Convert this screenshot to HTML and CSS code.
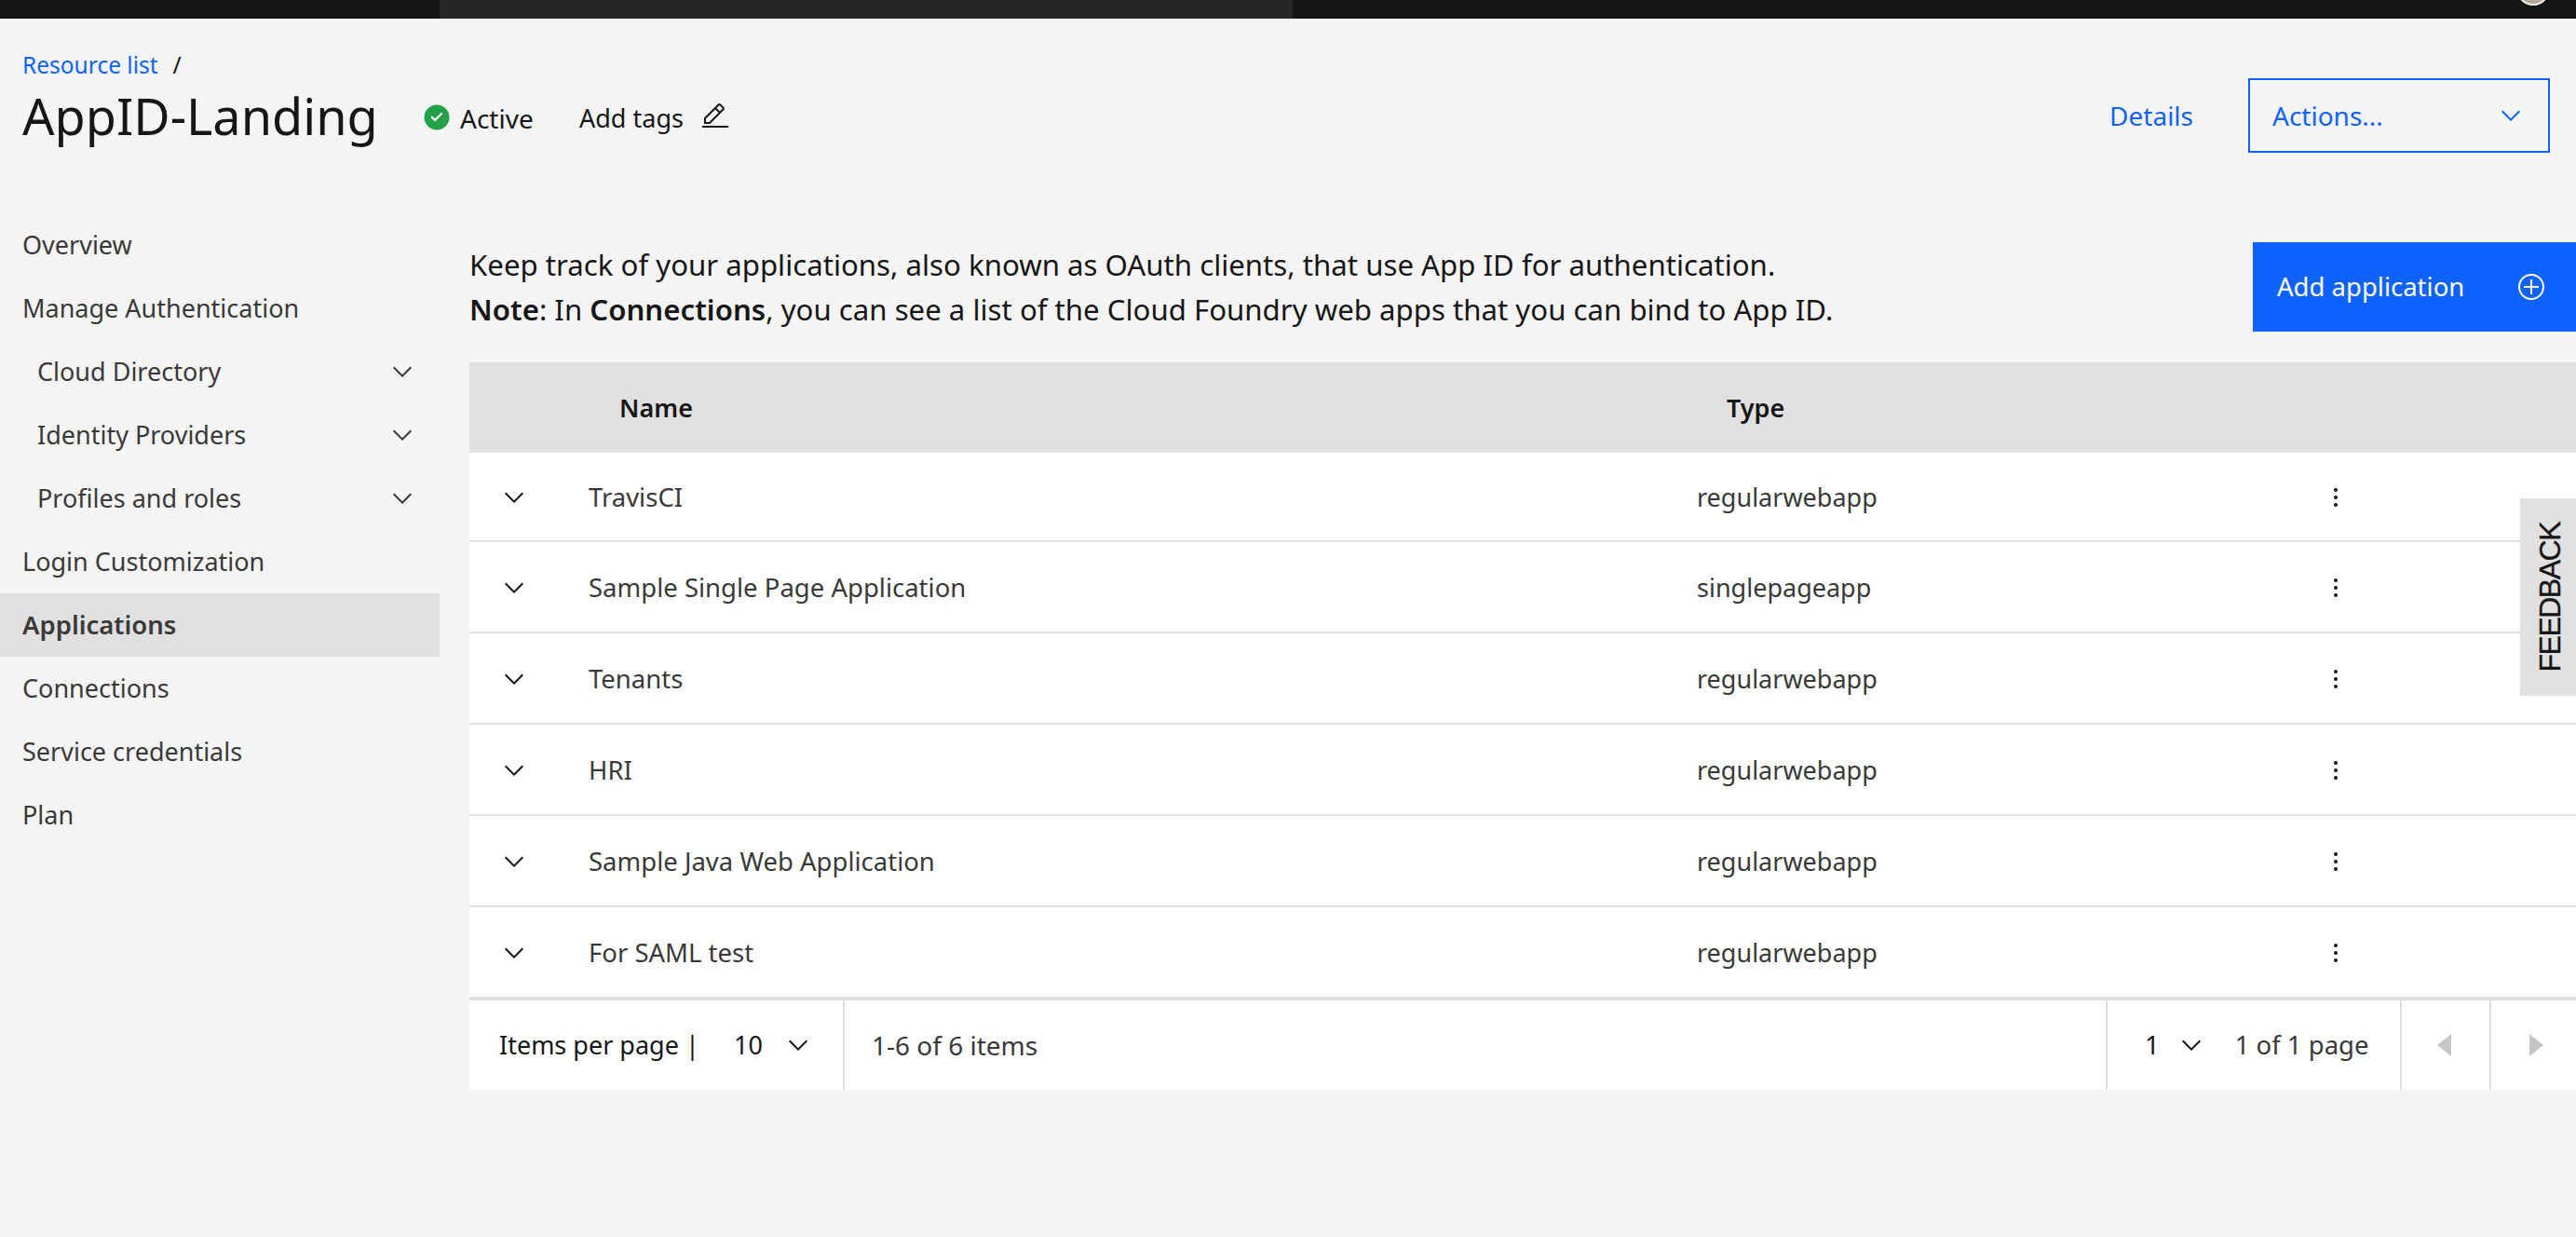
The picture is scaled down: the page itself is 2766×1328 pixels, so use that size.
FILE: index.html
```html
<!DOCTYPE html>
<html>
<head>
    <title>AppID-Landing: Applications</title>
    <meta charset="utf-8" />
    <link rel="stylesheet" href="styles.css">
</head>
<body>
    <svg class="sprite" xmlns="http://www.w3.org/2000/svg">
        <symbol id="chev" viewBox="0 0 32 32"><path d="M16 22L6 12l1.4-1.4L16 19.2l8.6-8.6L26 12z"/></symbol>
        <symbol id="kebab" viewBox="0 0 32 32"><circle cx="16" cy="8" r="2"/><circle cx="16" cy="16" r="2"/><circle cx="16" cy="24" r="2"/></symbol>
    </svg>

    <div class="topbar">
        <div class="topbar-mid"></div>
        <div class="avatar"></div>
    </div>

    <header class="head">
        <div class="crumbs"><a class="crumb-link">Resource list</a><span class="crumb-sep">/</span></div>
        <div class="head-row">
            <h1 class="title">AppID-Landing</h1>
            <svg class="status-icon" viewBox="0 0 28 28"><circle cx="14" cy="14" r="13.5" fill="#24a148"/><path d="M12 18.6l-4.6-4.6 1.5-1.5 3.1 3.1 6.900-6.900 1.500 1.500z" fill="#fff"/></svg>
            <span class="status-text">Active</span>
            <span class="tags-text">Add tags</span>
            <svg class="edit-icon" viewBox="0 0 32 32"><path d="M2 26h28v2H2z"/><path d="M25.400 9c.8-.8.8-2 0-2.800l-3.600-3.600c-.8-.8-2-.8-2.800 0l-15 15V24h6.400l15-15zm-5-5L24 7.600l-3 3L17.400 7l3-3zM6 22v-3.600l10-10 3.600 3.600-10 10H6z"/></svg>
            <a class="details">Details</a>
            <div class="actions">
                <span>Actions...</span>
                <svg class="icon"><use href="#chev"/></svg>
            </div>
        </div>
    </header>

    <div class="layout">
        <nav class="side">
            <a class="side-item">Overview</a>
            <a class="side-item">Manage Authentication</a>
            <a class="side-item sub">Cloud Directory<svg class="icon side-chev"><use href="#chev"/></svg></a>
            <a class="side-item sub">Identity Providers<svg class="icon side-chev"><use href="#chev"/></svg></a>
            <a class="side-item sub">Profiles and roles<svg class="icon side-chev"><use href="#chev"/></svg></a>
            <a class="side-item">Login Customization</a>
            <a class="side-item current">Applications</a>
            <a class="side-item">Connections</a>
            <a class="side-item">Service credentials</a>
            <a class="side-item">Plan</a>
        </nav>

        <main class="main">
            <section class="intro">
                <p class="intro-text">Keep track of your applications, also known as OAuth clients, that use App ID for authentication.<br>
                <b>Note</b>: In <b>Connections</b>, you can see a list of the Cloud Foundry web apps that you can bind to App ID.</p>
                <button class="add-btn">
                    <span>Add application</span>
                    <svg class="icon" viewBox="0 0 32 32"><path d="M16 4c6.600 0 12 5.400 12 12s-5.400 12-12 12S4 22.600 4 16 9.400 4 16 4m0-2C8.300 2 2 8.300 2 16s6.300 14 14 14 14-6.300 14-14S23.700 2 16 2z"/><path d="M24 15h-7V8h-2v7H8v2h7v7h2v-7h7z"/></svg>
                </button>
            </section>

            <div class="table-head">
                <span class="th-name">Name</span>
                <span class="th-type">Type</span>
            </div>
            <div class="rows">
                <div class="row"><svg class="icon"><use href="#chev"/></svg><span class="cell-name">TravisCI</span><span class="cell-type">regularwebapp</span><svg class="icon"><use href="#kebab"/></svg></div>
                <div class="row"><svg class="icon"><use href="#chev"/></svg><span class="cell-name">Sample Single Page Application</span><span class="cell-type">singlepageapp</span><svg class="icon"><use href="#kebab"/></svg></div>
                <div class="row"><svg class="icon"><use href="#chev"/></svg><span class="cell-name">Tenants</span><span class="cell-type">regularwebapp</span><svg class="icon"><use href="#kebab"/></svg></div>
                <div class="row"><svg class="icon"><use href="#chev"/></svg><span class="cell-name">HRI</span><span class="cell-type">regularwebapp</span><svg class="icon"><use href="#kebab"/></svg></div>
                <div class="row"><svg class="icon"><use href="#chev"/></svg><span class="cell-name">Sample Java Web Application</span><span class="cell-type">regularwebapp</span><svg class="icon"><use href="#kebab"/></svg></div>
                <div class="row"><svg class="icon"><use href="#chev"/></svg><span class="cell-name">For SAML test</span><span class="cell-type">regularwebapp</span><svg class="icon"><use href="#kebab"/></svg></div>
            </div>

            <div class="pager">
                <div class="pager-size">
                    <span class="pager-label">Items per page |</span>
                    <span class="pager-value">10</span>
                    <svg class="icon"><use href="#chev"/></svg>
                </div>
                <div class="pager-count">1-6 of 6 items</div>
                <div class="pager-page">
                    <span class="pager-value">1</span>
                    <svg class="icon"><use href="#chev"/></svg>
                    <span class="pager-of">1 of 1 page</span>
                </div>
                <div class="pager-arrow"><svg class="caret" viewBox="0 0 32 32"><path d="M20 24l-10-8 10-8z"/></svg></div>
                <div class="pager-arrow last"><svg class="caret" viewBox="0 0 32 32"><path d="M12 8l10 8-10 8z"/></svg></div>
            </div>
        </main>
    </div>

    <div class="feedback"><span>FEEDBACK</span></div>
</body>
</html>
```

FILE: styles.css
```css
html, body {margin: 0; height: 100%; overflow: hidden;}
body {
    position: relative;
    background: #f4f4f4;
    color: #161616;
    font: 28px/48px "Noto Sans", "Liberation Sans", sans-serif;}
.sprite {display: none;}
.icon {width: 32px; height: 32px; flex: none; fill: currentColor;}
b {font-weight: 600;}

/* top bar */
.topbar {height: 20px; background: #161616; position: relative; overflow: hidden;}
.topbar-mid {margin-left: 472px; width: 916px; height: 20px; background: #262626;}
.avatar {
    position: absolute;
    right: 28px;
    top: -30px;
    width: 32px;
    height: 32px;
    border-radius: 50%;
    background: #b9a994;
    border: 2px solid #eee;}

/* page head */
.head {height: 209px; box-sizing: border-box; padding: 30px 28px 0 24px;}
.crumbs {height: 40px; display: flex; align-items: center; font-size: 24.500px;}
.crumb-link {color: #0f62fe;}
.crumb-sep {margin-left: 16px;}
.head-row {display: flex; align-items: center; height: 80px; margin-top: -6px;}
.title {margin: 0; font-size: 54px; font-weight: 400; line-height: 80px; width: 431px;}
.status-icon {width: 28px; height: 28px; margin: 4px 11px 0 0;}
.status-text {width: 128px; margin-top: 6px;}
.tags-text {width: 130px; margin-top: 6px; font-size: 27px;}
.edit-icon {width: 32px; height: 32px; fill: #161616; margin-top: 2px;}
.details {margin-left: auto; color: #0f62fe; margin-right: 59px;}
.actions {
    width: 324px;
    height: 80px;
    box-sizing: border-box;
    border: 2px solid #0f62fe;
    color: #0f62fe;
    padding: 0 24px 0 24px;
    display: flex;
    align-items: center;
    justify-content: space-between;}

/* side nav */
.layout {display: flex;}
.side {width: 472px; flex: none; color: #393939; font-size: 27px;}
.side-item {
    display: flex;
    align-items: center;
    justify-content: space-between;
    height: 68px;
    padding: 0 24px 0 24px;}
.side-item.sub {padding-left: 40px;}
.side-chev {color: #393939;}
.side-item.current {background: #e0e0e0; font-weight: 600; font-size: 27.500px;}

/* main */
.main {flex: 1; min-width: 0; margin-left: 32px; padding-top: 31px;}
.intro {display: flex; justify-content: space-between; margin-bottom: 33px;}
.intro-text {margin: 0; font-size: 31.200px;}
.add-btn {
    flex: none;
    width: 347px;
    height: 96px;
    box-sizing: border-box;
    border: 0;
    background: #0f62fe;
    color: #fff;
    font: inherit;
    font-size: 27.500px;
    padding: 0 32px 0 26px;
    display: flex;
    align-items: center;
    justify-content: space-between;}

/* table */
.table-head {
    height: 97px;
    background: #e0e0e0;
    display: flex;
    align-items: center;
    font-size: 27px;
    font-weight: 600;}
.th-name {margin-left: 161px; width: 1189px;}
.rows {background: #fff; color: #393939;}
.row {
    height: 98px;
    box-sizing: border-box;
    border-bottom: 2px solid #e0e0e0;
    padding: 2px 0 0 32px;
    display: flex;
    align-items: center;}
.row:first-child {height: 96px;}
.row .icon {color: #161616;}
.cell-name {margin-left: 64px; width: 1190px; font-size: 27.500px;}
.cell-type {width: 670px; font-size: 27px;}

/* pager */
.pager {
    display: flex;
    height: 96px;
    background: #fff;
    color: #393939;
    border-top: 2px solid #e0e0e0;}
.pager > div {display: flex; align-items: center; box-sizing: border-box; border-right: 2px solid #e0e0e0;}
.pager .icon {color: #161616;}
.pager-value, .pager-label {color: #161616;}
.pager-size {width: 403px; padding-left: 32px; font-size: 27px;}
.pager-label {width: 252px;}
.pager-value {margin-right: 18px;}
.pager-size .pager-value {margin-right: 22px;}
.pager-count {width: 1356px; padding-left: 29px;}
.pager-page {width: 316px; padding-left: 40px; font-size: 27.500px;}
.pager-of {margin-left: 31px;}
.pager-arrow {width: 96px; justify-content: center;}
.pager > .pager-arrow.last {flex: 1; width: auto; border-right: 0; padding-left: 3px;}
.caret {width: 48px; height: 48px; fill: #c6c6c6;}

/* feedback tab */
.feedback {
    position: absolute;
    right: 0;
    top: 535px;
    width: 60px;
    height: 212px;
    box-sizing: border-box;
    padding-left: 3px;
    background: #e0e0e0;
    display: flex;
    align-items: center;
    justify-content: center;}
.feedback span {
    writing-mode: vertical-rl;
    transform: rotate(180deg);
    font: 32px/1 "Liberation Sans", sans-serif;
    letter-spacing: -1.500px;
    -webkit-text-stroke: .4px #161616;
    color: #161616;}
```
